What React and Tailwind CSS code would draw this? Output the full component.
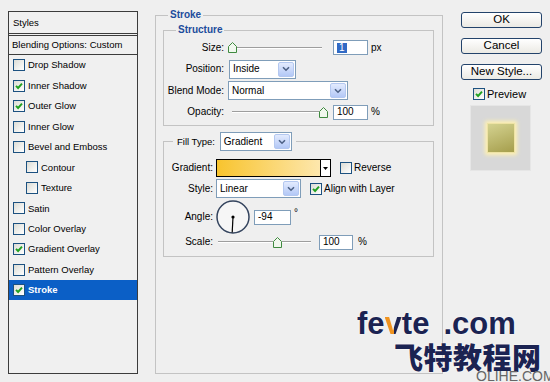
import React from 'react';

const styleRows = [
  { name: 'Drop Shadow', on: false },
  { name: 'Inner Shadow', on: true },
  { name: 'Outer Glow', on: true },
  { name: 'Inner Glow', on: false },
  { name: 'Bevel and Emboss', on: false },
  { name: 'Contour', on: false, sub: true },
  { name: 'Texture', on: false, sub: true },
  { name: 'Satin', on: false },
  { name: 'Color Overlay', on: false },
  { name: 'Gradient Overlay', on: true },
  { name: 'Pattern Overlay', on: false },
  { name: 'Stroke', on: true, active: true },
];

const Check = ({ checked, className = '' }) => (
  <span
    className={`flex h-[12px] w-[12px] shrink-0 items-center justify-center border border-[#1c5180] bg-[linear-gradient(135deg,#dcdcd5,#ffffff)] ${className}`}
  >
    {checked && (
      <svg width="8" height="8" viewBox="0 0 8 8">
        <path d="M1 3.8 L3.1 6 L7 1.6" fill="none" stroke="#21a121" strokeWidth="1.9" />
      </svg>
    )}
  </span>
);

const Arrow = () => (
  <span className="ml-auto mr-[1px] flex h-[15px] w-[16px] items-center justify-center rounded-[2px] border border-[#b4c8f0] bg-[linear-gradient(#e3ebfe,#b3c8f6)]">
    <svg width="8" height="6" viewBox="0 0 8 6">
      <path d="M1 1.2 L4 4.2 L7 1.2" fill="none" stroke="#4d6185" strokeWidth="1.6" />
    </svg>
  </span>
);

const Select = ({ value, className = '' }) => (
  <div className={`flex h-[19px] items-center border border-[#7f9db9] bg-white pl-[3px] ${className}`}>
    <span>{value}</span>
    <Arrow />
  </div>
);

const Thumb = () => (
  <svg width="9" height="11" viewBox="0 0 9 11" className="shrink-0">
    <path d="M0.5 4.5 L4.5 0.5 L8.5 4.5 L8.5 10.5 L0.5 10.5 Z" fill="#f1f8ee" stroke="#3f8a3f" />
  </svg>
);

const Track = ({ className = '' }) => (
  <div className={`h-[2px] border-t border-[#9e9e9e] bg-white ${className}`} />
);

const Field = ({ children, className = '' }) => (
  <div className={`flex h-[15px] items-center border border-[#7f9db9] bg-white pl-[3px] ${className}`}>
    {children}
  </div>
);

const Button = ({ children }) => (
  <div className="flex h-[16px] items-center justify-center rounded-[3px] border border-[#23436b] bg-[linear-gradient(#ffffff,#ebeae4)] text-[11.5px] leading-none">
    {children}
  </div>
);

export default function App() {
  return (
    <div className="relative flex h-[382px] w-[550px] items-start overflow-hidden bg-[#efefef] font-['Liberation_Sans',Arial,sans-serif] text-black">
      {/* styles list */}
      <div className="ml-[8px] mt-[11px] flex h-[363px] w-[130px] flex-col border border-[#3c3c3c] bg-[#f0f0f0] text-[9.5px] leading-none">
        <div className="flex h-[24px] items-center border-b-[3px] border-double border-[#3c3c3c] pl-[4px]">Styles</div>
        <div className="flex h-[19px] items-center border-b border-[#3c3c3c] pl-[3px]">Blending Options: Custom</div>
        {styleRows.map((r) => (
          <div
            key={r.name}
            className={`flex h-[20.45px] items-center gap-[3px] ${r.sub ? 'pl-[17px]' : 'pl-[4px]'} ${
              r.active ? 'bg-[#0b5fc6] font-bold text-white' : ''
            }`}
          >
            <Check checked={r.on} />
            <span>{r.name}</span>
          </div>
        ))}
      </div>

      {/* stroke panel */}
      <fieldset className="ml-[17px] mt-[9px] h-[365px] w-[288px] border border-[#c3c3c3]">
        <legend className="ml-[12px] px-[2px] text-[10px] font-bold leading-[12px] text-[#1c4c9c]">Stroke</legend>
        <div className="pl-[7px] pt-[3px] text-[10px] leading-none">
          <fieldset className="w-[271px] border border-[#c3c3c3]">
            <legend className="ml-[12px] px-[2px] text-[10px] font-bold leading-[12px] text-[#1c4c9c]">Structure</legend>
            <div className="flex flex-col pb-[2px] pt-[1px]">
              <div className="flex h-[21.5px] items-center">
                <span className="w-[60px] text-right">Size:</span>
                <div className="ml-[4px] flex w-[94px] items-center">
                  <Thumb />
                  <Track className="flex-1" />
                </div>
                <Field className="ml-[11px] w-[35px]">
                  <span className="bg-[#316ac5] px-[2px] text-white">1</span>
                </Field>
                <span className="ml-[3px]">px</span>
              </div>
              <div className="flex h-[21.5px] items-center">
                <span className="w-[60px] text-right">Position:</span>
                <Select value="Inside" className="ml-[5px] w-[67px]" />
              </div>
              <div className="flex h-[21.5px] items-center">
                <span className="w-[60px] text-right">Blend Mode:</span>
                <Select value="Normal" className="ml-[4px] w-[120px]" />
              </div>
              <div className="flex h-[21.5px] items-center">
                <span className="w-[60px] text-right">Opacity:</span>
                <div className="ml-[8px] flex w-[96px] items-center">
                  <Track className="flex-1" />
                  <Thumb />
                </div>
                <Field className="ml-[5px] w-[35px]">100</Field>
                <span className="ml-[3px]">%</span>
              </div>
            </div>
          </fieldset>

          <fieldset className="mt-[6px] w-[271px] border border-[#c3c3c3]">
            <legend className="ml-[9px] px-[4px]">
              <div className="flex items-center">
                <span className="text-[9.5px]">Fill Type:</span>
                <Select value="Gradient" className="ml-[5px] w-[72px]" />
              </div>
            </legend>
            <div className="flex flex-col pb-[6px] pt-[8px]">
              <div className="flex h-[18px] items-center">
                <span className="w-[49px] text-right">Gradient:</span>
                <div className="ml-[3px] flex h-[18px] w-[115px] border-[1.5px] border-black">
                  <div className="flex-1 bg-[linear-gradient(90deg,#f8c42e,#fde7ad)]" />
                  <div className="flex w-[10px] items-center justify-center border-l border-black bg-white">
                    <svg width="5" height="3" viewBox="0 0 5 3">
                      <path d="M0 0 L5 0 L2.5 3 Z" fill="#000" />
                    </svg>
                  </div>
                </div>
                <Check className="ml-[9px] bg-[linear-gradient(135deg,#d5e2f0,#f5f9ff)]" />
                <span className="ml-[2px]">Reverse</span>
              </div>
              <div className="mt-[2px] flex h-[19px] items-center">
                <span className="w-[49px] text-right">Style:</span>
                <Select value="Linear" className="ml-[3px] w-[85px]" />
                <Check checked className="ml-[9px]" />
                <span className="ml-[2px]">Align with Layer</span>
              </div>
              <div className="mt-[2px] flex h-[34px] items-center">
                <span className="w-[49px] text-right">Angle:</span>
                <svg width="34" height="34" viewBox="0 0 34 34" className="ml-[3px]">
                  <circle cx="17" cy="17" r="16" fill="#f6f6f6" stroke="#34445e" strokeWidth="1.5" />
                  <line x1="17" y1="17" x2="16.2" y2="32.5" stroke="#000" strokeWidth="1.2" />
                  <circle cx="17" cy="17" r="1.6" fill="#000" />
                </svg>
                <Field className="ml-[4px] w-[37px]">-94</Field>
                <span className="ml-[3px] self-start pt-[8px]">°</span>
              </div>
              <div className="flex h-[16px] items-center">
                <span className="w-[49px] text-right">Scale:</span>
                <div className="ml-[5px] flex w-[93px] items-center">
                  <Track className="w-[55px]" />
                  <Thumb />
                  <Track className="flex-1" />
                </div>
                <Field className="ml-[8px] w-[34px]">100</Field>
                <span className="ml-[5px]">%</span>
              </div>
            </div>
          </fieldset>
        </div>
      </fieldset>

      {/* buttons */}
      <div className="ml-[18px] mt-[12px] flex w-[81px] flex-col">
        <div className="flex flex-col gap-[10px]">
          <Button>OK</Button>
          <Button>Cancel</Button>
          <Button>New Style...</Button>
        </div>
        <div className="mt-[8px] flex items-center gap-[2px] pl-[12px] text-[11px] leading-none">
          <Check checked />
          <span>Preview</span>
        </div>
        <div className="ml-[9px] mt-[5px] flex h-[66px] w-[61px] items-center justify-center border border-[#e6e6e6] bg-[#d8d8d8]">
          <div className="h-[30px] w-[28px] border border-[#eee3a4] bg-[linear-gradient(160deg,#d4d290,#a59e4c)] shadow-[0_0_4px_2px_#fff1b0]" />
        </div>
      </div>

      {/* watermark */}
      <div className="absolute left-[357px] top-[311px] flex h-[26px] items-end text-[31px] font-bold leading-[26px] text-[#1b2352] [text-shadow:0_0_2px_#fff]">
        <span>
          fe
          <span className="bg-[linear-gradient(90deg,#ef9320_55%,#1b2352_55%)] bg-clip-text text-transparent [text-shadow:none]">v</span>
          te
        </span>
        <span className="ml-[14px]">.com</span>
      </div>
      <div className="absolute left-[394px] top-[343px] font-['Noto_Sans_CJK_SC',sans-serif] text-[29px] font-black leading-[27px] tracking-[0.5px] text-[#1b2352] [text-shadow:0_0_2px_#fff]">
        飞特教程网
      </div>
      <div className="absolute left-[476px] top-[371px] text-[14px] leading-[11px] text-[#666]">OLIHE.COM</div>
    </div>
  );
}
